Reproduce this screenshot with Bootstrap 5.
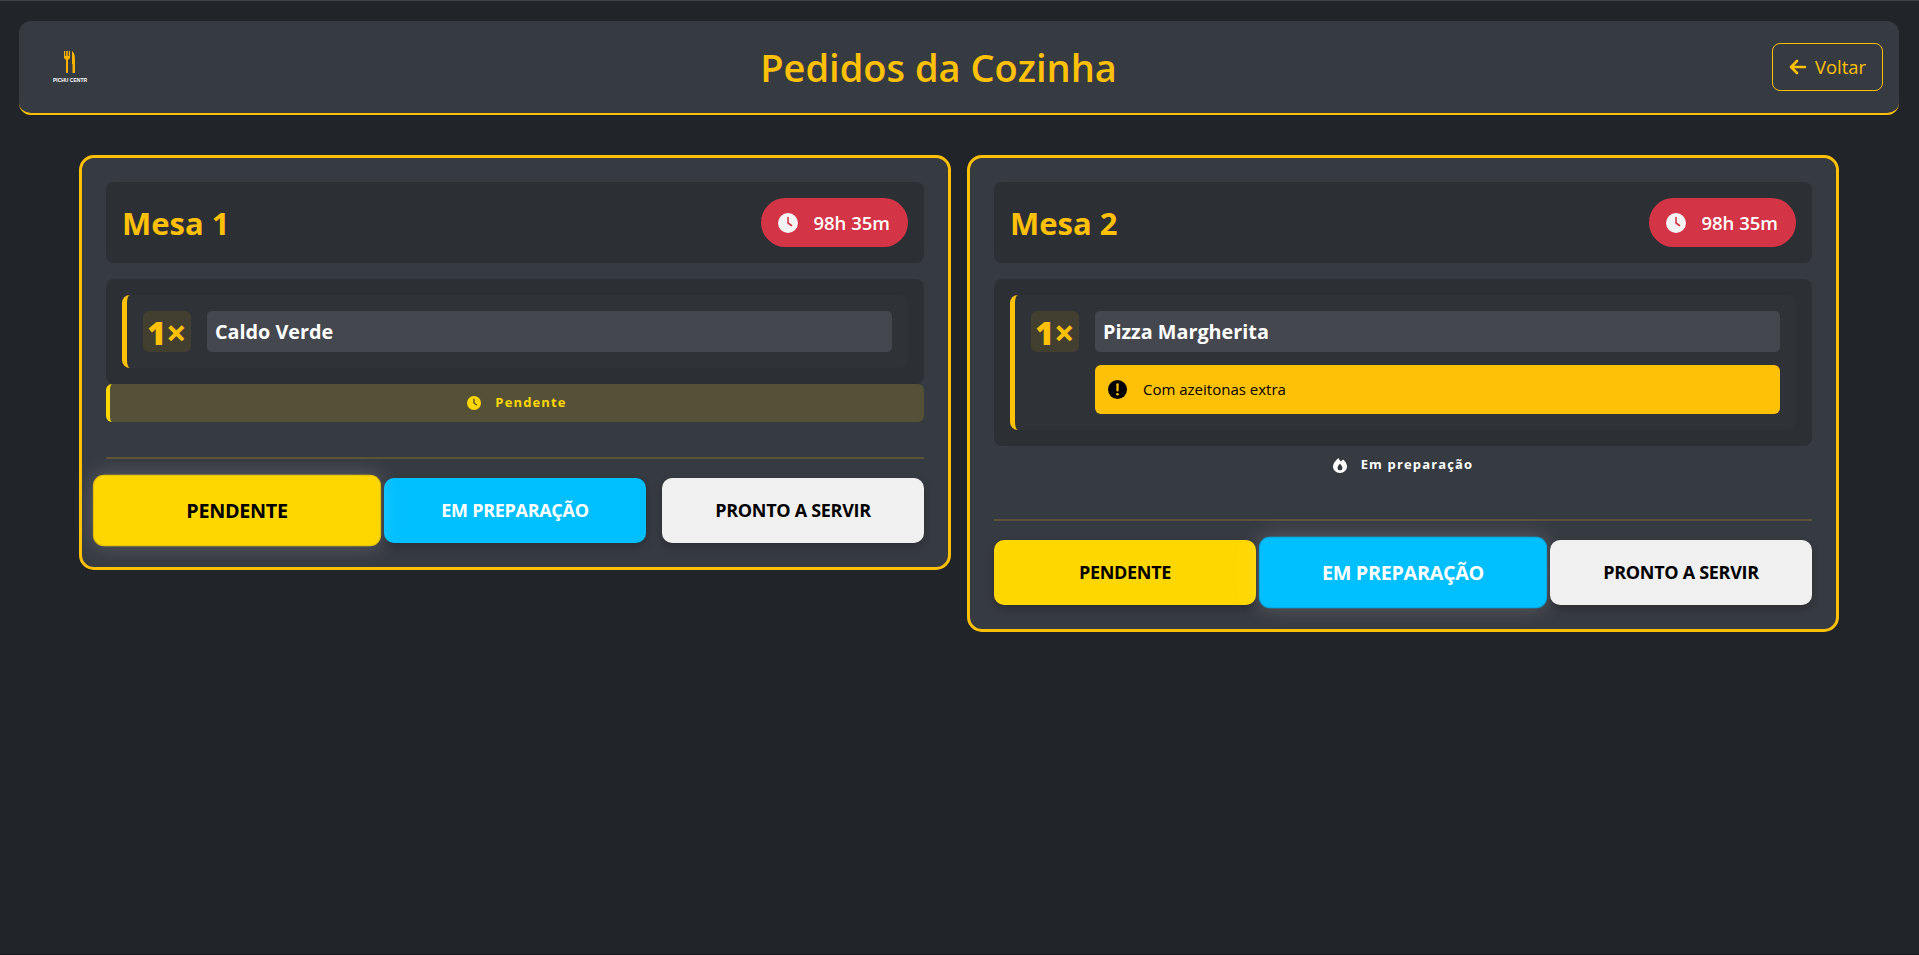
<!DOCTYPE html>
<html lang="pt">
<head>
  <meta charset="UTF-8" />
  <meta name="viewport" content="width=device-width, initial-scale=1" />
  <title>Pedidos da Cozinha</title>
  <link href="https://cdn.jsdelivr.net/npm/bootstrap@5.3.0/dist/css/bootstrap.min.css" rel="stylesheet" />
  <style>
    html, body { height: 100%; }
    body {
      background-color: #212529;
      color: #fff;
      font-family: "Open Sans", "Noto Sans", sans-serif;
      border-top: 1px solid #3d4045;
      border-bottom: 1px solid #16181b;
      overflow: hidden;
    }
    .top-bar {
      margin: 20px 20px 0 19px;
      height: 94px;
      padding: 0 16px;
      background-color: #363a41;
      border-bottom: 2px solid #ffc107;
      border-radius: 12px;
    }
    .logo-box { width: 70px; }
    .logo-name {
      font-family: "Liberation Sans", sans-serif;
      font-size: 5px;
      font-weight: 700;
      line-height: 6px;
      white-space: nowrap;
      color: #fff;
    }
    .page-title {
      font-size: 38px;
      font-weight: 600;
      line-height: 1.2;
      color: #ffc107;
      margin: 2px 0 0;
    }
    .btn-back {
      display: flex;
      align-items: center;
      gap: 8px;
      height: 48px;
      padding: 0 16px;
      font-size: 18.4px;
      color: #ffc107;
      border: 1px solid #ffc107;
      border-radius: 8px;
    }
    .btn-back:hover { color: #ffc107; border-color: #ffc107; }
    .orders { margin: 40px 80px 0 79px; }
    .order-box {
      background-color: #363a41;
      border: 3px solid #ffc107;
      border-radius: 15px;
      padding: 24px;
    }
    .order-head {
      background-color: #2c3034;
      border-radius: 8px;
      padding: 16px;
      margin-bottom: 16px;
    }
    .order-name {
      font-size: 31px;
      font-weight: 700;
      line-height: 1.2;
      color: #ffc107;
      margin: 2px 0 0;
    }
    .time-pill {
      display: flex;
      align-items: center;
      gap: 15px;
      height: 49px;
      padding: 0 18px 0 17px;
      background-color: #d33446;
      border-radius: 25px;
      font-size: 18.5px;
      font-weight: 600;
      color: #fff;
    }
    .items-wrap {
      background-color: #2c3034;
      border-radius: 8px;
      padding: 16px;
    }
    .item-row {
      display: flex;
      gap: 16px;
      padding: 16px;
      background-color: #2f3337;
      border-left: 5px solid #ffc107;
      border-radius: 8px;
    }
    .qty-box {
      flex: 0 0 48px;
      height: 41px;
      padding-top: 3px;
      display: flex;
      align-items: center;
      justify-content: center;
      background-color: #423f31;
      border-radius: 6px;
      color: #ffc107;
      font-size: 32px;
      font-weight: 800;
      line-height: 1;
    }
    .qty-times { font-size: 36px; font-weight: 700; }
    .item-name {
      height: 41px;
      padding: 1px 8px 0;
      display: flex;
      align-items: center;
      background-color: #44474d;
      border-radius: 5px;
      font-size: 19.8px;
      font-weight: 700;
      color: #fff;
    }
    .item-note {
      display: flex;
      align-items: center;
      gap: 16px;
      height: 49px;
      margin-top: 13px;
      padding: 0 13px;
      background-color: #ffc107;
      border-radius: 6px;
      font-size: 15px;
      font-weight: 500;
      color: #000;
    }
    .state-line {
      display: flex;
      align-items: center;
      justify-content: center;
      gap: 14px;
      height: 38px;
      margin-bottom: 35px;
      font-size: 13px;
      font-weight: 700;
      letter-spacing: 1.15px;
    }
    .state-wait {
      background-color: #545137;
      border-left: 4px solid #ffd700;
      border-radius: 6px;
      color: #ffd700;
    }
    .state-cook { color: #fff; }
    .order-rule {
      height: 2px;
      background-color: #5c5238;
      margin-bottom: 19px;
    }
    .state-btn {
      flex: 1 1 0;
      height: 65px;
      border: 0;
      border-radius: 10px;
      font-size: 18px;
      font-weight: 700;
      letter-spacing: -.3px;
      text-transform: uppercase;
      box-shadow: 0 4px 8px rgba(0, 0, 0, .2);
    }
    .state-btn.is-on {
      transform: scale(1.1);
      box-shadow: 0 0 20px rgba(255, 255, 255, .2), inset 0 0 0 1px rgba(0, 0, 0, .12);
    }
    .btn-wait { background-color: #ffd700; color: #000; }
    .btn-cook { background-color: #00bfff; color: #fff; }
    .btn-done { background-color: #f0f0f0; color: #000; }
  </style>
</head>
<body>
  <!-- Cabecalho -->
  <header class="top-bar d-flex align-items-center justify-content-between">
    <div class="logo-box d-flex flex-column align-items-center">
      <svg width="12" height="22" viewBox="0 0 12 22">
        <path fill="#ffb300" d="M0 0h1.200v5h1V0h1.600v5h1V0H6v7L4 9v13H2V9L0 7z"/>
        <path fill="#ffb300" d="M8 0c2 1 3 4 3 9v13H8.500v-9H8z"/>
      </svg>
      <div class="logo-name mt-1">PICHU CENTR</div>
    </div>
    <h1 class="page-title">Pedidos da Cozinha</h1>
    <a href="#" class="btn btn-back">
      <svg width="18" height="16" viewBox="0 0 18 16"><path fill="none" stroke="#ffc107" stroke-width="2.6" stroke-linecap="round" stroke-linejoin="round" d="M8 2 2 8l6 6M2 8h14"/></svg>
      Voltar
    </a>
  </header>

  <!-- Pedidos -->
  <main class="orders">
    <div class="row g-3 align-items-start">
      <div class="col-6">
        <section class="order-box">
          <div class="order-head d-flex align-items-center justify-content-between">
            <h2 class="order-name">Mesa 1</h2>
            <div class="time-pill">
              <svg width="20" height="20" viewBox="0 0 20 20"><circle cx="10" cy="10" r="10" fill="#f4f4f4"/><path d="M10 4.5V10l3.5 2.5" fill="none" stroke="#d33446" stroke-width="1.6" stroke-linecap="round"/></svg>
              98h 35m
            </div>
          </div>
          <div class="items-wrap">
            <div class="item-row">
              <div class="qty-box">1<span class="qty-times">×</span></div>
              <div class="flex-grow-1">
                <div class="item-name">Caldo Verde</div>
              </div>
            </div>
          </div>
          <div class="state-line state-wait">
            <svg width="14" height="14" viewBox="0 0 20 20"><circle cx="10" cy="10" r="10" fill="#ffd700"/><path d="M10 4.5V10l3.5 2.5" fill="none" stroke="#545137" stroke-width="2" stroke-linecap="round"/></svg>
            Pendente
          </div>
          <div class="order-rule"></div>
          <div class="d-flex gap-3">
            <button type="button" class="state-btn btn-wait is-on">Pendente</button>
            <button type="button" class="state-btn btn-cook">Em preparação</button>
            <button type="button" class="state-btn btn-done">Pronto a servir</button>
          </div>
        </section>
      </div>
      <div class="col-6">
        <section class="order-box">
          <div class="order-head d-flex align-items-center justify-content-between">
            <h2 class="order-name">Mesa 2</h2>
            <div class="time-pill">
              <svg width="20" height="20" viewBox="0 0 20 20"><circle cx="10" cy="10" r="10" fill="#f4f4f4"/><path d="M10 4.5V10l3.5 2.5" fill="none" stroke="#d33446" stroke-width="1.6" stroke-linecap="round"/></svg>
              98h 35m
            </div>
          </div>
          <div class="items-wrap">
            <div class="item-row">
              <div class="qty-box">1<span class="qty-times">×</span></div>
              <div class="flex-grow-1">
                <div class="item-name">Pizza Margherita</div>
                <div class="item-note">
                  <svg width="19" height="19" viewBox="0 0 20 20"><circle cx="10" cy="10" r="10" fill="#000"/><path d="M10 4.5v6.5" stroke="#ffc107" stroke-width="2.4" stroke-linecap="round"/><circle cx="10" cy="15" r="1.4" fill="#ffc107"/></svg>
                  Com azeitonas extra
                </div>
              </div>
            </div>
          </div>
          <div class="state-line state-cook">
            <svg width="14" height="15" viewBox="0 0 14 15"><path fill="#fff" fill-rule="evenodd" d="M5.500 0C6 1.500 7 2.500 8 3.500L10 1.500C12.500 3.500 14 6 14 8.500 14 12 11 15 7 15S0 12 0 8.500C0 5.500 2.500 2.500 5.500 0zM7 5.500C7.500 7 9.500 8 9.500 10A2.500 2.500 0 0 1 4.500 10C4.500 8 6 7 7 5.500z"/></svg>
            Em preparação
          </div>
          <div class="order-rule"></div>
          <div class="d-flex gap-3">
            <button type="button" class="state-btn btn-wait">Pendente</button>
            <button type="button" class="state-btn btn-cook is-on">Em preparação</button>
            <button type="button" class="state-btn btn-done">Pronto a servir</button>
          </div>
        </section>
      </div>
    </div>
  </main>

  <script src="https://cdn.jsdelivr.net/npm/bootstrap@5.3.0/dist/js/bootstrap.bundle.min.js"></script>
</body>
</html>
